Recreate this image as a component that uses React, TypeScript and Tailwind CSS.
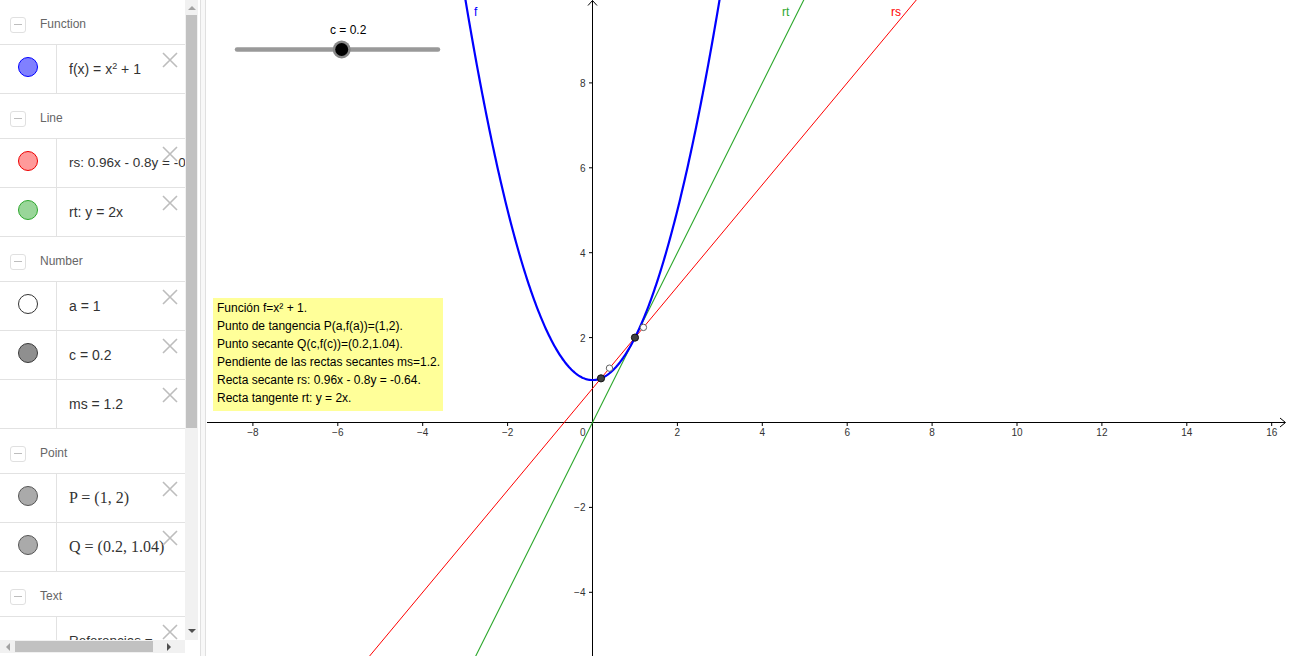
import React from "react"

const ox = 592.5
const oy = 422.5
const s = 42.45
const px = (x: number) => ox + x * s
const py = (y: number) => oy - y * s

type Item = {
  fill?: string
  border?: string
  text: React.ReactNode
  serif?: boolean
  small?: boolean
}

type Section = { title: string; items: Item[] }

const sections: Section[] = [
  {
    title: "Function",
    items: [
      {
        fill: "bg-[#8080ff]",
        border: "border-[#0000ff]",
        text: (
          <>
            f(x) = x<sup className="text-[9px] relative -top-[5px]">2</sup> + 1
          </>
        ),
      },
    ],
  },
  {
    title: "Line",
    items: [
      { fill: "bg-[#ff9a9a]", border: "border-[#ee0000]", text: "rs: 0.96x - 0.8y = -0.64", small: true },
      { fill: "bg-[#99d699]", border: "border-[#2ea82e]", text: "rt: y = 2x" },
    ],
  },
  {
    title: "Number",
    items: [
      { fill: "bg-white", border: "border-[#333333]", text: "a = 1" },
      { fill: "bg-[#8f8f8f]", border: "border-[#3a3a3a]", text: "c = 0.2" },
      { text: "ms = 1.2" },
    ],
  },
  {
    title: "Point",
    items: [
      { fill: "bg-[#aaaaaa]", border: "border-[#555555]", text: "P = (1, 2)", serif: true },
      { fill: "bg-[#aaaaaa]", border: "border-[#555555]", text: "Q = (0.2, 1.04)", serif: true },
    ],
  },
  {
    title: "Text",
    items: [{ text: "Referencias = ", small: true }],
  },
]

function CloseIcon() {
  return (
    <svg width="16" height="16" viewBox="0 0 16 16" className="absolute top-[7px] right-[7px]">
      <path d="M1 1 L15 15 M15 1 L1 15" stroke="#bdbdbd" strokeWidth="1.6" fill="none" />
    </svg>
  )
}

function Header({ title }: { title: string }) {
  return (
    <div className="h-[45px] shrink-0 border-b border-[#e2e2e2] flex items-center pt-[4px]">
      <div className="ml-[10px] mt-[1px] w-[16px] h-[16px] rounded-[3px] border border-[#e0e0e0] flex items-center justify-center">
        <div className="w-[8px] h-px bg-[#bdbdbd]" />
      </div>
      <span className="ml-[14px] text-[12px] text-[#666666]">{title}</span>
    </div>
  )
}

function Row({ item }: { item: Item }) {
  return (
    <div className="h-[49px] shrink-0 border-b border-[#e2e2e2] flex">
      <div className="w-[57px] shrink-0 border-r border-[#e2e2e2] flex items-center justify-center">
        {item.fill && (
          <div className={`w-[20px] h-[20px] mb-[4px] rounded-full border ${item.fill} ${item.border}`} />
        )}
      </div>
      <div className="relative flex-1 flex items-center pl-[12px] whitespace-nowrap overflow-hidden text-[#333333]">
        <span
          className={
            item.serif
              ? "font-['Liberation_Serif',serif] text-[16px]"
              : item.small
                ? "text-[13.5px]"
                : "text-[14px]"
          }
        >
          {item.text}
        </span>
        <CloseIcon />
      </div>
    </div>
  )
}

function AlgebraPanel() {
  return (
    <div className="w-[200px] shrink-0 h-[656px] flex flex-col bg-white">
      <div className="flex h-[640px]">
        <div className="w-[185px] h-[640px] overflow-hidden flex flex-col">
          {sections.map((sec) => (
            <React.Fragment key={sec.title}>
              <Header title={sec.title} />
              {sec.items.map((it, i) => (
                <Row key={i} item={it} />
              ))}
            </React.Fragment>
          ))}
        </div>
        <div className="w-[13px] h-[640px] bg-[#f1f1f1] flex flex-col">
          <div className="h-[15px] flex items-center justify-center">
            <div className="w-0 h-0 border-x-[4px] border-x-transparent border-b-[4px] border-b-[#a3a3a3]" />
          </div>
          <div className="h-[413px] mx-px bg-[#c1c1c1]" />
          <div className="flex-1" />
          <div className="h-[18px] flex items-center justify-center">
            <div className="w-0 h-0 border-x-[4px] border-x-transparent border-t-[4px] border-t-[#505050]" />
          </div>
        </div>
      </div>
      <div className="flex h-[13px]">
        <div className="w-[185px] h-[13px] bg-[#f1f1f1] flex items-center">
          <div className="w-[15px] flex items-center justify-center">
            <div className="w-0 h-0 border-y-[4px] border-y-transparent border-r-[4px] border-r-[#a3a3a3]" />
          </div>
          <div className="w-[138px] h-[11px] bg-[#c1c1c1]" />
          <div className="flex-1 flex items-center justify-center">
            <div className="w-0 h-0 border-y-[4px] border-y-transparent border-l-[4px] border-l-[#505050]" />
          </div>
        </div>
      </div>
    </div>
  )
}

function parabola() {
  const pts: string[] = []
  for (let x = -3.05; x <= 3.05; x += 0.025) {
    pts.push(`${px(x).toFixed(2)},${py(x * x + 1).toFixed(2)}`)
  }
  return "M" + pts.join(" L")
}

const xTicks = [-8, -6, -4, -2, 2, 4, 6, 8, 10, 12, 14, 16]
const yTicks = [-4, -2, 2, 4, 6, 8]
const lbl = (n: number) => (n < 0 ? "\u2212" + Math.abs(n) : String(n))
const ff = "Liberation Sans, Arial, sans-serif"

function GraphView() {
  const yTop = 9.96
  const yBot = -5.6
  return (
    <div className="relative flex-1 h-[656px] bg-white overflow-hidden">
      <svg width="1083" height="656" viewBox="206 0 1083 656" className="block">
        {/* axes */}
        <line x1="207" y1={oy} x2="1285" y2={oy} stroke="#000" strokeWidth="1" />
        <polyline points={`1280,${oy - 4.5} 1285.5,${oy} 1280,${oy + 4.5}`} fill="none" stroke="#000" strokeWidth="1" />
        <line x1={ox} y1="0.5" x2={ox} y2="656" stroke="#000" strokeWidth="1" />
        <polyline points={`${ox - 4.5},5.5 ${ox},0.5 ${ox + 4.5},5.5`} fill="none" stroke="#000" strokeWidth="1" />
        {xTicks.map((k) => (
          <g key={"x" + k}>
            <line x1={px(k)} y1={oy} x2={px(k)} y2={oy + 3.5} stroke="#000" strokeWidth="1" />
            <text x={px(k)} y={oy + 13.5} textAnchor="middle" fontSize="10" fill="#333" fontFamily={ff}>
              {lbl(k)}
            </text>
          </g>
        ))}
        <text x={ox - 7} y={oy + 13.5} textAnchor="end" fontSize="10" fill="#333" fontFamily={ff}>
          0
        </text>
        {yTicks.map((k) => (
          <g key={"y" + k}>
            <line x1={ox - 3.5} y1={py(k)} x2={ox} y2={py(k)} stroke="#000" strokeWidth="1" />
            <text x={ox - 7} y={py(k) + 4} textAnchor="end" fontSize="10" fill="#333" fontFamily={ff}>
              {lbl(k)}
            </text>
          </g>
        ))}

        {/* lines */}
        <line x1={px(yBot / 2)} y1={py(yBot)} x2={px(yTop / 2)} y2={py(yTop)} stroke="#2ea82e" strokeWidth="1.1" />
        <line
          x1={px((yBot - 0.8) / 1.2)}
          y1={py(yBot)}
          x2={px((yTop - 0.8) / 1.2)}
          y2={py(yTop)}
          stroke="#ff0000"
          strokeWidth="1"
        />
        <path d={parabola()} fill="none" stroke="#0000ff" strokeWidth="2.2" />

        {/* labels */}
        <text x="474" y="15.5" fontSize="12" fill="#0000ff" fontFamily={ff}>
          f
        </text>
        <text x="782" y="15.5" fontSize="12" fill="#2ea82e" fontFamily={ff}>
          rt
        </text>
        <text x="891" y="15.5" fontSize="12" fill="#ff0000" fontFamily={ff}>
          rs
        </text>

        {/* points */}
        <circle cx={px(0.4)} cy={py(1.28)} r="3.2" fill="#fff" stroke="#606060" strokeWidth="1" />
        <circle cx={px(1.2)} cy={py(2.24)} r="3.2" fill="#fff" stroke="#606060" strokeWidth="1" />
        <circle cx={px(1)} cy={py(2)} r="3.6" fill="#404040" stroke="#111" strokeWidth="1" />
        <circle cx={px(0.2)} cy={py(1.04)} r="3.6" fill="#404040" stroke="#111" strokeWidth="1" />

        {/* slider */}
        <line x1="237" y1="49.5" x2="438" y2="49.5" stroke="#999999" strokeWidth="4.5" strokeLinecap="round" />
        <circle cx="341.7" cy="49.5" r="9" fill="#888888" />
        <circle cx="341.7" cy="49.5" r="6.5" fill="#000" />
        <text x="330" y="34" fontSize="12" fill="#000" fontFamily={ff}>
          c = 0.2
        </text>
      </svg>

      <div className="absolute left-[7px] top-[298px] w-[230px] h-[113px] bg-[#ffff99] px-[4px] pt-px text-[12px] leading-[18px] text-black whitespace-nowrap">
        <div>Función f=x² + 1.</div>
        <div>Punto de tangencia P(a,f(a))=(1,2).</div>
        <div>Punto secante Q(c,f(c))=(0.2,1.04).</div>
        <div>Pendiente de las rectas secantes ms=1.2.</div>
        <div>Recta secante rs: 0.96x - 0.8y = -0.64.</div>
        <div>Recta tangente rt: y = 2x.</div>
      </div>
    </div>
  )
}

export default function App() {
  return (
    <div className="flex w-[1289px] h-[656px] overflow-hidden bg-white font-['Liberation_Sans',Arial,sans-serif]">
      <AlgebraPanel />
      <div className="w-[6px] shrink-0 h-[656px] border-x border-[#e0e0e0] bg-[#f8f8f8]" />
      <GraphView />
    </div>
  )
}
